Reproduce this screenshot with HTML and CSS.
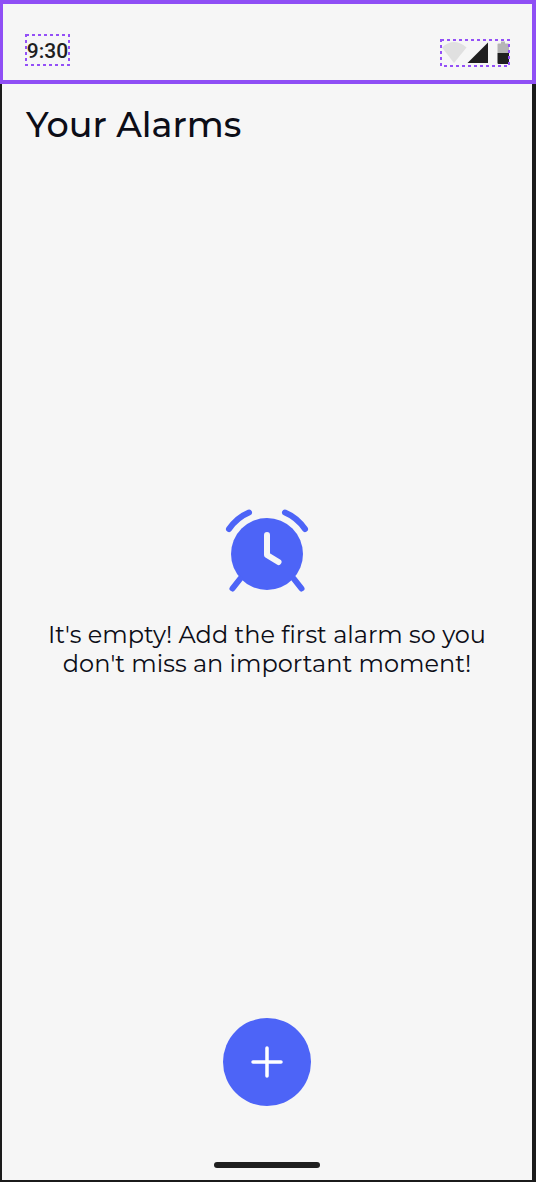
FILE: index.html
```html
<!DOCTYPE html>
<html lang="en">
<head>
<meta charset="utf-8">
<meta name="viewport" content="width=device-width, initial-scale=1">
<title>Your Alarms</title>
<link rel="stylesheet" href="styles.css">
</head>
<body>
<div class="screen">
  <header class="status-bar">
    <div class="status-time">
      <time>9:30</time>
      <svg class="outline" aria-hidden="true"><rect x="1" y="1" width="43" height="30"/></svg>
    </div>
    <div class="status-icons">
      <svg width="70" height="28" viewBox="0 0 70 28" aria-hidden="true">
        <path d="M2 8.500Q14 -2.500 26.500 8.500L14 24Z" fill="#e0e0e0"/>
        <path d="M27.500 24L48 3.500V24Z" fill="#1f1f1f"/>
        <path d="M57.500 14V5.500Q57.500 4.500 58.500 4.500H61V2.500H65V4.500H68Q69 4.500 69 5.500V14Z" fill="#b5b5b5"/>
        <path d="M57.500 14H69V24Q69 25 68 25H58.500Q57.500 25 57.500 24Z" fill="#1f1f1f"/>
      </svg>
      <svg class="outline" aria-hidden="true"><rect x="1" y="1" width="68" height="26"/></svg>
    </div>
  </header>
  <main class="content">
    <h1 class="title">Your Alarms</h1>
    <section class="empty">
      <svg class="clock" width="84" height="84" viewBox="0 0 84 84" aria-hidden="true">
        <circle cx="42" cy="45" r="36" fill="#4d64f7"/>
        <g fill="none" stroke="#4d64f7" stroke-width="6" stroke-linecap="round">
          <path d="M4 20Q12 8.500 24 3.500"/>
          <path d="M60 3.500Q72 8.500 80 20"/>
          <path d="M15 70L7.500 79.500"/>
          <path d="M69 70L76.500 79.500"/>
        </g>
        <path d="M42 26V46L53.500 53" fill="none" stroke="#f6f6f6" stroke-width="6" stroke-linecap="round" stroke-linejoin="round"/>
      </svg>
      <p class="message">It's empty! Add the first alarm so you don't miss an important moment!</p>
    </section>
    <button class="add" type="button" aria-label="Add alarm">
      <svg width="32" height="32" viewBox="0 0 32 32" aria-hidden="true">
        <path d="M16 2V30M2 16H30" fill="none" stroke="#fff" stroke-width="3.500" stroke-linecap="round"/>
      </svg>
    </button>
  </main>
  <footer class="nav"><span class="handle"></span></footer>
</div>
</body>
</html>
```
FILE: styles.css
```css
* {
  box-sizing: border-box;
}

body {
  margin: 0;
  background: #f6f6f6;
  color: #0c0d17;
  font-family: Montserrat, Inter, sans-serif;
}

.screen {
  display: flex;
  flex-direction: column;
  min-height: 100vh;
  border: solid #1b1b1b;
  border-width: 0 4px 2px 2px;
}

.status-bar {
  display: flex;
  justify-content: space-between;
  align-items: flex-start;
  height: 84px;
  margin: 0 -4px 0 -2px;
  padding: 30px 22px 0 22px;
  border: 4px solid #8f4ff5;
  border-left-width: 3px;
}

.status-time {
  position: relative;
  width: 45px;
  height: 32px;
  color: #1f1f1f;
  font: 500 21px/34px Roboto, sans-serif;
  text-align: center;
  white-space: nowrap;
}

.status-icons {
  position: relative;
  display: flex;
  margin-top: 5px;
}

.outline {
  position: absolute;
  top: 0;
  left: 0;
  width: 100%;
  height: 100%;
  fill: none;
  stroke: #9450f7;
  stroke-width: 2px;
  stroke-dasharray: 3 3;
}

.content {
  display: flex;
  flex: 1;
  flex-direction: column;
  align-items: center;
  padding: 20px 24px 0;
}

.title {
  align-self: flex-start;
  margin: 0;
  font-size: 35px;
  font-weight: 500;
  line-height: 42px;
}

.empty {
  display: flex;
  flex: 1;
  flex-direction: column;
  align-items: center;
  justify-content: center;
  gap: 27px;
  padding-bottom: 117px;
  padding-top: 140px;
}

.message {
  max-width: 460px;
  margin: 0;
  font-size: 24px;
  font-weight: 400;
  line-height: 29px;
  text-align: center;
}

.add {
  display: grid;
  place-items: center;
  width: 88px;
  height: 88px;
  padding: 0;
  border: 0;
  border-radius: 50%;
  background: #4d64f7;
}

.nav {
  display: flex;
  justify-content: center;
  padding: 56px 0 12px;
}

.handle {
  width: 106px;
  height: 6px;
  border-radius: 3px;
  background: #1f1f1f;
}
```
